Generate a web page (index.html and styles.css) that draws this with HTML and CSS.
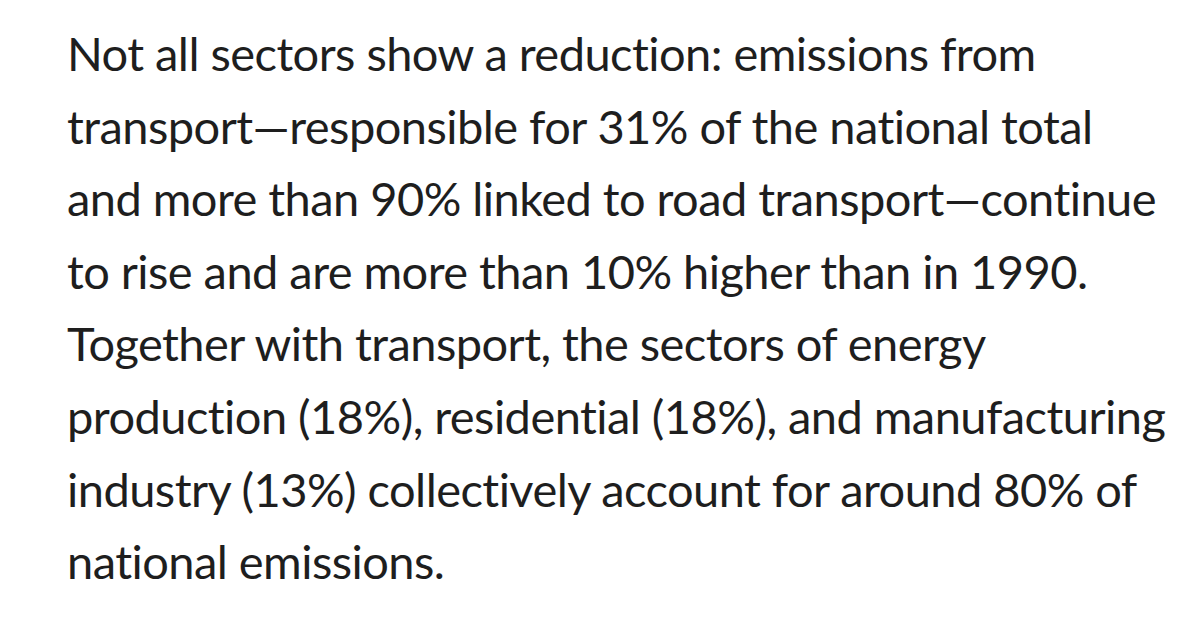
FILE: index.html
```html
<!DOCTYPE html>
<html lang="en">
<head>
<meta charset="utf-8">
<title>Transport emissions</title>
<link rel="stylesheet" href="styles.css">
</head>
<body>
<main class="page">
  <p class="para">Not all sectors show a reduction: emissions from<br>transport—responsible for 31% of the national total<br>and more than 90% linked to road transport—continue<br>to rise and are more than 10% higher than in 1990.<br>Together with transport, the sectors of energy<br>production (18%), residential (18%), and manufacturing<br>industry (13%) collectively account for around 80% of<br>national emissions.</p>
</main>
</body>
</html>
```
FILE: styles.css
```css
html, body {
  margin: 0;
  padding: 0;
  background: #ffffff;
}
.page {
  width: 1200px;
  height: 628px;
  overflow: hidden;
  padding: 17px 0 0 67px;
  box-sizing: border-box;
}
.para {
  margin: 0;
  font-family: "Lato", "Liberation Sans", sans-serif;
  font-weight: 400;
  font-size: 47px;
  line-height: 72.6px;
  letter-spacing: -0.55px;
  font-variant-ligatures: none;
  color: #1e1e1e;
  white-space: nowrap;
}
```
